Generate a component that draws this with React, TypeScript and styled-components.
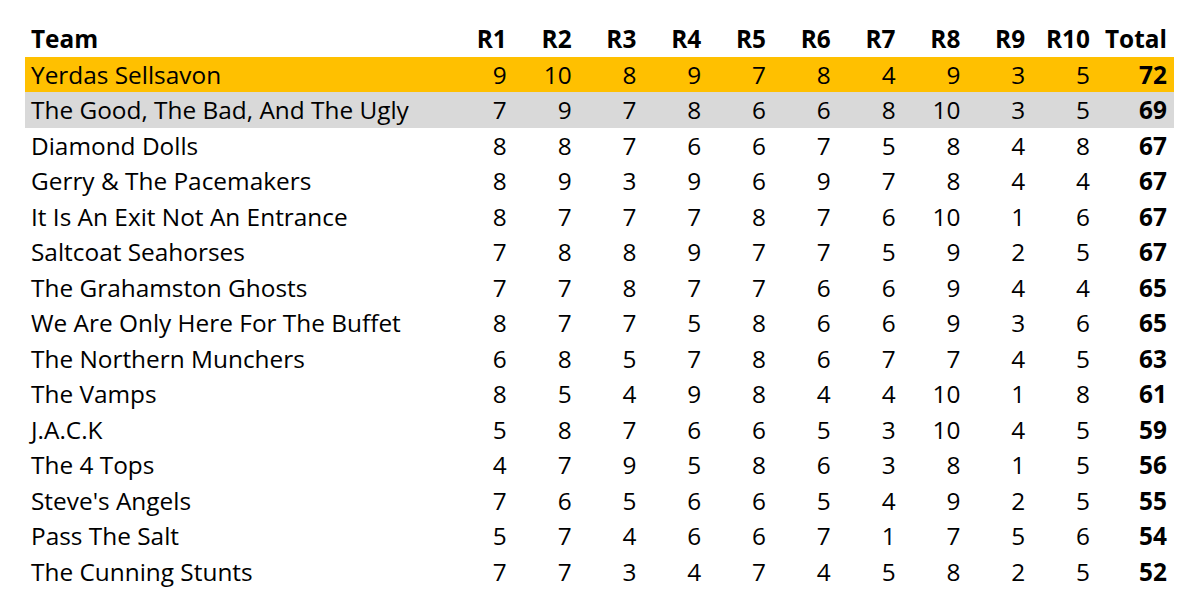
import React from "react";
import styled, { createGlobalStyle } from "styled-components";

const GlobalStyle = createGlobalStyle`
  html, body {
    margin: 0;
    padding: 0;
    background: #ffffff;
  }
  body {
    font-family: "Open Sans", "Noto Sans", sans-serif;
    color: #000000;
  }
`;

const Page = styled.div`
  width: 1200px;
  height: 611px;
  box-sizing: border-box;
  padding: 21px 26px 0 25px;
  background: #ffffff;
  overflow: hidden;
`;

const Table = styled.div`
  display: grid;
  grid-template-columns: 424px repeat(10, 64.8px) 77px;
  width: 1149px;
`;

type RowKind = "header" | "gold" | "grey" | "plain";

const rowBg: Record<RowKind, string> = {
  header: "transparent",
  gold: "#ffc000",
  grey: "#d9d9d9",
  plain: "transparent",
};

const Row = styled.div<{ $kind: RowKind }>`
  display: contents;
  & > * {
    background: ${(p) => rowBg[p.$kind]};
    font-weight: ${(p) => (p.$kind === "header" ? 700 : 400)};
  }
`;

const Cell = styled.div<{ $align?: "left" | "right"; $bold?: boolean }>`
  height: 35.5px;
  line-height: 35.5px;
  font-size: 24.4px;
  box-sizing: border-box;
  white-space: nowrap;
  text-align: ${(p) => (p.$align === "left" ? "left" : "right")};
  padding: ${(p) => (p.$align === "left" ? "0 0 0 6px" : "0 7px 0 0")};
  ${(p) => (p.$bold ? "font-weight: 700 !important;" : "")}
`;

const data: [string, number[], number][] = [
  ["Yerdas Sellsavon", [9, 10, 8, 9, 7, 8, 4, 9, 3, 5], 72],
  ["The Good, The Bad, And The Ugly", [7, 9, 7, 8, 6, 6, 8, 10, 3, 5], 69],
  ["Diamond Dolls", [8, 8, 7, 6, 6, 7, 5, 8, 4, 8], 67],
  ["Gerry & The Pacemakers", [8, 9, 3, 9, 6, 9, 7, 8, 4, 4], 67],
  ["It Is An Exit Not An Entrance", [8, 7, 7, 7, 8, 7, 6, 10, 1, 6], 67],
  ["Saltcoat Seahorses", [7, 8, 8, 9, 7, 7, 5, 9, 2, 5], 67],
  ["The Grahamston Ghosts", [7, 7, 8, 7, 7, 6, 6, 9, 4, 4], 65],
  ["We Are Only Here For The Buffet", [8, 7, 7, 5, 8, 6, 6, 9, 3, 6], 65],
  ["The Northern Munchers", [6, 8, 5, 7, 8, 6, 7, 7, 4, 5], 63],
  ["The Vamps", [8, 5, 4, 9, 8, 4, 4, 10, 1, 8], 61],
  ["J.A.C.K", [5, 8, 7, 6, 6, 5, 3, 10, 4, 5], 59],
  ["The 4 Tops", [4, 7, 9, 5, 8, 6, 3, 8, 1, 5], 56],
  ["Steve's Angels", [7, 6, 5, 6, 6, 5, 4, 9, 2, 5], 55],
  ["Pass The Salt", [5, 7, 4, 6, 6, 7, 1, 7, 5, 6], 54],
  ["The Cunning Stunts", [7, 7, 3, 4, 7, 4, 5, 8, 2, 5], 52],
];

const rounds = ["R1", "R2", "R3", "R4", "R5", "R6", "R7", "R8", "R9", "R10"];

export default function App() {
  return (
    <>
      <GlobalStyle />
      <Page>
        <Table>
          <Row $kind="header">
            <Cell $align="left">Team</Cell>
            {rounds.map((r) => (
              <Cell key={r}>{r}</Cell>
            ))}
            <Cell>Total</Cell>
          </Row>
          {data.map(([team, scores, total], i) => (
            <Row key={team} $kind={i === 0 ? "gold" : i === 1 ? "grey" : "plain"}>
              <Cell $align="left">{team}</Cell>
              {scores.map((s, j) => (
                <Cell key={j}>{s}</Cell>
              ))}
              <Cell $bold>{total}</Cell>
            </Row>
          ))}
        </Table>
      </Page>
    </>
  );
}
